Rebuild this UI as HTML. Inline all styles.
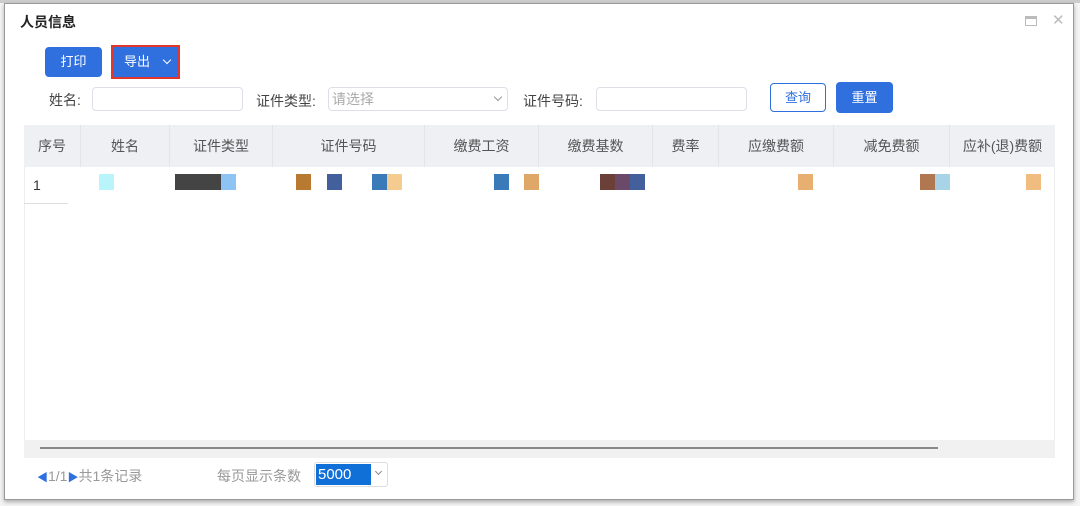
<!DOCTYPE html>
<html><head><meta charset="utf-8"><style>
*{margin:0;padding:0;box-sizing:border-box}
body{width:1080px;height:506px;background:#f4f4f4;position:relative;overflow:hidden;font-family:"Liberation Sans","Noto Sans CJK SC",sans-serif;font-size:14px;color:#333}
.a{position:absolute}
.dlg{left:4px;top:3px;width:1070px;height:497px;background:#fff;border:1px solid #999;box-shadow:0 2px 4px rgba(0,0,0,.3)}
.btn{background:#2f6fde;color:#fff;border-radius:4px;text-align:center;font-size:13px}
.inp{border:1px solid #dcdfe6;border-radius:4px;height:24px;background:#fff}
.lbl{font-size:14px;color:#444}
.th{top:125px;height:42px;line-height:42px;text-align:center;background:#eef0f4;border-right:1px solid #e2e4e8;font-size:14px;color:#555}
.sq{top:174px;height:16px}
.chev{position:absolute;width:6px;height:6px;border-right:1px solid currentColor;border-bottom:1px solid currentColor;transform:rotate(45deg)}
</style></head><body>
<div class="a" style="left:0;top:0;width:1080px;height:3px;background:#ccc"></div>
<div class="a dlg"></div>
<div class="a" style="left:20px;top:12px;font-size:14px;font-weight:bold;color:#222">人员信息</div>
<div class="a" style="left:1025px;top:16px;width:12px;height:10px;border:1px solid #bbb;border-top-width:3px"></div>
<div class="a" style="left:1052px;top:11px;color:#bbb;font-size:15px">✕</div>
<div class="a btn" style="left:45px;top:47px;width:57px;height:30px;line-height:30px">打印</div>
<div class="a btn" style="left:111px;top:45px;width:69px;height:34px;line-height:30px;border:2px solid #e0362c;border-radius:0;text-align:left;padding-left:11px">导出<span class="chev" style="left:51px;top:10px;color:#fff"></span></div>
<div class="a lbl" style="left:49px;top:90px">姓名:</div>
<div class="a inp" style="left:92px;top:87px;width:151px"></div>
<div class="a lbl" style="left:256px;top:91px">证件类型:</div>
<div class="a inp" style="left:328px;top:87px;width:180px;color:#aaa;font-size:14px;padding-left:3px;line-height:22px">请选择<span class="chev" style="left:166px;top:6px;color:#999"></span></div>
<div class="a lbl" style="left:523px;top:91px">证件号码:</div>
<div class="a inp" style="left:596px;top:87px;width:151px"></div>
<div class="a" style="left:770px;top:83px;width:56px;height:29px;border:1px solid #2f6fde;border-radius:4px;color:#2f6fde;text-align:center;line-height:27px;font-size:13px">查询</div>
<div class="a btn" style="left:836px;top:82px;width:57px;height:31px;line-height:31px">重置</div>
<div class="a" style="left:24px;top:125px;width:1031px;height:333px;background:#fff;border:1px solid #eee"></div>
<div class="a th" style="left:24px;width:57px">序号</div>
<div class="a th" style="left:81px;width:89px">姓名</div>
<div class="a th" style="left:170px;width:103px">证件类型</div>
<div class="a th" style="left:273px;width:152px">证件号码</div>
<div class="a th" style="left:425px;width:114px">缴费工资</div>
<div class="a th" style="left:539px;width:114px">缴费基数</div>
<div class="a th" style="left:653px;width:66px">费率</div>
<div class="a th" style="left:719px;width:115px">应缴费额</div>
<div class="a th" style="left:834px;width:116px">减免费额</div>
<div class="a th" style="left:950px;width:105px;border:none">应补(退)费额</div>
<div class="a" style="left:33px;top:177px">1</div>
<div class="a" style="left:24px;top:203px;width:44px;height:1px;background:#ddd"></div>
<div class="a sq" style="left:99px;width:15px;background:#b8f4fa"></div>
<div class="a sq" style="left:175px;width:46px;background:#444"></div>
<div class="a sq" style="left:221px;width:15px;background:#8dc4f4"></div>
<div class="a sq" style="left:296px;width:15px;background:#b87a30"></div>
<div class="a sq" style="left:327px;width:15px;background:#44609c"></div>
<div class="a sq" style="left:372px;width:15px;background:#3a7ab8"></div>
<div class="a sq" style="left:387px;width:15px;background:#f4cc90"></div>
<div class="a sq" style="left:494px;width:15px;background:#3a7ab8"></div>
<div class="a sq" style="left:524px;width:15px;background:#e0a868"></div>
<div class="a sq" style="left:600px;width:15px;background:#6a4038"></div>
<div class="a sq" style="left:615px;width:15px;background:#6a4a68"></div>
<div class="a sq" style="left:630px;width:15px;background:#44609c"></div>
<div class="a sq" style="left:798px;width:15px;background:#e8b070"></div>
<div class="a sq" style="left:920px;width:15px;background:#b07850"></div>
<div class="a sq" style="left:935px;width:15px;background:#a8d4e8"></div>
<div class="a sq" style="left:1026px;width:15px;background:#f0bc80"></div>
<div class="a" style="left:24px;top:440px;width:1031px;height:18px;background:#f1f1f1"></div>
<div class="a" style="left:40px;top:447px;width:898px;height:2px;background:#888"></div>
<div class="a" style="left:37px;top:466px;font-size:14px;color:#999"><span style="color:#2f6fde;font-size:11px">◀</span>1/1<span style="color:#2f6fde;font-size:11px">▶</span>共1条记录</div>
<div class="a" style="left:217px;top:466px;font-size:14px;color:#999">每页显示条数</div>
<div class="a" style="left:314px;top:462px;width:74px;height:25px;border:1px solid #ddd;border-radius:3px;background:#fff"></div>
<div class="a" style="left:316px;top:464px;width:55px;height:21px;background:#1070d8;color:#fff;font-size:15px;line-height:21px;padding-left:2px">5000</div>
<span class="chev" style="left:376px;top:469px;color:#888;width:5px;height:5px"></span>
</body></html>
